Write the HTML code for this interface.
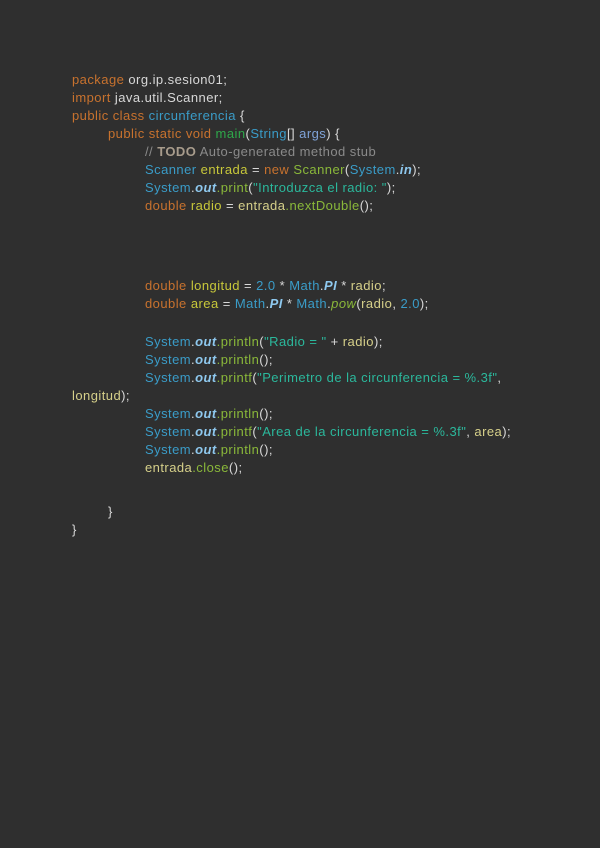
<!DOCTYPE html>
<html><head><meta charset="utf-8"><style>
html,body{margin:0;padding:0;width:600px;height:848px;background:#2f2f2f;overflow:hidden}
.l{position:absolute;white-space:pre;font-family:"Liberation Sans",sans-serif;font-size:13px;line-height:18px;color:#d8d8d8;letter-spacing:0.45px}
.k{color:#c8722e}.c{color:#3a9cc8}.v{color:#c8c83a}.m{color:#8ab83a}.s{color:#2bb89c}.g{color:#8a8a8a}.t{color:#a89c8c;font-weight:bold}
.o{color:#8ec8ee;font-weight:bold;font-style:italic}.a{color:#7fa3d8}.y{color:#d6d08a}.n{color:#3a9cc8}.mn{color:#2fa84a}.p{color:#d8d8d8}
</style></head><body>
<div class="l" style="left:72px;top:71px"><span class="k">package</span> org.ip.sesion01;</div>
<div class="l" style="left:72px;top:89px"><span class="k">import</span> java.util.Scanner;</div>
<div class="l" style="left:72px;top:107px"><span class="k">public class</span> <span class="c">circunferencia</span> {</div>
<div class="l" style="left:108px;top:125px"><span class="k">public static void</span> <span class="mn">main</span>(<span class="c">String</span>[] <span class="a">args</span>) {</div>
<div class="l" style="left:145px;top:143px"><span class="g">// </span><span class="t">TODO</span><span class="g"> Auto-generated method stub</span></div>
<div class="l" style="left:145px;top:161px"><span class="c">Scanner</span> <span class="v">entrada</span> = <span class="k">new</span> <span class="m">Scanner</span>(<span class="c">System</span>.<span class="o">in</span>);</div>
<div class="l" style="left:145px;top:179px"><span class="c">System</span>.<span class="o">out</span><span class="m">.print</span>(<span class="s">"Introduzca el radio: "</span>);</div>
<div class="l" style="left:145px;top:197px"><span class="k">double</span> <span class="v">radio</span> = <span class="y">entrada</span><span class="m">.nextDouble</span>();</div>
<div class="l" style="left:145px;top:277px"><span class="k">double</span> <span class="v">longitud</span> = <span class="n">2.0</span> * <span class="c">Math</span>.<span class="o">PI</span> * <span class="y">radio</span>;</div>
<div class="l" style="left:145px;top:295px"><span class="k">double</span> <span class="v">area</span> = <span class="c">Math</span>.<span class="o">PI</span> * <span class="c">Math</span>.<span class="m" style="font-style:italic">pow</span>(<span class="y">radio</span>, <span class="n">2.0</span>);</div>
<div class="l" style="left:145px;top:333px"><span class="c">System</span>.<span class="o">out</span><span class="m">.println</span>(<span class="s">"Radio = "</span> + <span class="y">radio</span>);</div>
<div class="l" style="left:145px;top:351px"><span class="c">System</span>.<span class="o">out</span><span class="m">.println</span>();</div>
<div class="l" style="left:145px;top:369px"><span class="c">System</span>.<span class="o">out</span><span class="m">.printf</span>(<span class="s">"Perimetro de la circunferencia = %.3f"</span>,</div>
<div class="l" style="left:72px;top:387px"><span class="y">longitud</span>);</div>
<div class="l" style="left:145px;top:405px"><span class="c">System</span>.<span class="o">out</span><span class="m">.println</span>();</div>
<div class="l" style="left:145px;top:423px"><span class="c">System</span>.<span class="o">out</span><span class="m">.printf</span>(<span class="s">"Area de la circunferencia = %.3f"</span>, <span class="y">area</span>);</div>
<div class="l" style="left:145px;top:441px"><span class="c">System</span>.<span class="o">out</span><span class="m">.println</span>();</div>
<div class="l" style="left:145px;top:459px"><span class="y">entrada</span><span class="m">.close</span>();</div>
<div class="l" style="left:108px;top:503px">}</div>
<div class="l" style="left:72px;top:521px">}</div>
</body></html>
